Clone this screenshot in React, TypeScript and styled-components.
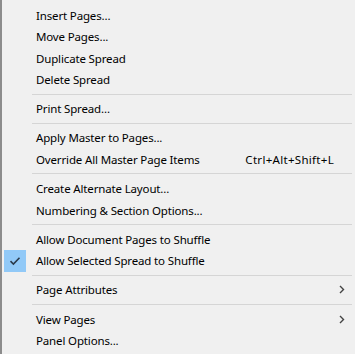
import React from "react";
import styled, { createGlobalStyle } from "styled-components";

const GlobalStyle = createGlobalStyle`
    html, body {
        margin: 0;
        padding: 0;
        background: #f0f0f0;
    }
`;

const Menu = styled.div`
    width: 355px;
    height: 354px;
    box-sizing: border-box;
    background: #f0f0f0;
    border-left: 2px solid #8c8c8c;
    padding-top: 4.25px;
    overflow: hidden;
    font-family: "Noto Sans", "Open Sans", sans-serif;
    font-size: 11.5px;
    letter-spacing: -0.15px;
    color: #000;
`;

const Item = styled.div`
    display: grid;
    grid-template-columns: 32px 1fr auto 21px;
    align-items: center;
    height: 21.5px;
    white-space: nowrap;
`;

const CheckCell = styled.div<{ $on?: boolean }>`
    margin-left: 2px;
    width: 22px;
    height: 21.5px;
    display: flex;
    align-items: center;
    justify-content: center;
    background: ${(p) => (p.$on ? "#91c9f7" : "transparent")};
`;

const Label = styled.span`
    padding-left: 2px;
`;

const Shortcut = styled.span`
    letter-spacing: 0.3px;
`;

const Arrow = styled.div`
    display: flex;
    align-items: center;
    justify-content: flex-end;
    padding-right: 10px;
`;

const Separator = styled.div`
    height: 7.7px;
    display: flex;
    align-items: center;
    padding-left: 30px;
    padding-right: 3px;

    &::after {
        content: "";
        flex: 1;
        height: 1px;
        background: #d5d5d5;
    }
`;

type Entry =
    | { sep: true }
    | { label: string; shortcut?: string; checked?: boolean; sub?: boolean };

const entries: Entry[] = [
    { label: "Insert Pages..." },
    { label: "Move Pages..." },
    { label: "Duplicate Spread" },
    { label: "Delete Spread" },
    { sep: true },
    { label: "Print Spread..." },
    { sep: true },
    { label: "Apply Master to Pages..." },
    { label: "Override All Master Page Items", shortcut: "Ctrl+Alt+Shift+L" },
    { sep: true },
    { label: "Create Alternate Layout..." },
    { label: "Numbering & Section Options..." },
    { sep: true },
    { label: "Allow Document Pages to Shuffle" },
    { label: "Allow Selected Spread to Shuffle", checked: true },
    { sep: true },
    { label: "Page Attributes", sub: true },
    { sep: true },
    { label: "View Pages", sub: true },
    { label: "Panel Options..." },
];

function Check() {
    return (
        <svg width="12" height="10" viewBox="0 0 12 10">
            <path d="M1.5 5.2 L4.4 8 L10.5 1.8" fill="none" stroke="#2b3a4a" strokeWidth="1.6" />
        </svg>
    );
}

function Chevron() {
    return (
        <svg width="6" height="9" viewBox="0 0 6 9">
            <path d="M1 1 L4.5 4.5 L1 8" fill="none" stroke="#444" strokeWidth="1.4" />
        </svg>
    );
}

export default function App() {
    return (
        <>
            <GlobalStyle />
            <Menu>
                {entries.map((e, i) =>
                    "sep" in e ? (
                        <Separator key={i} />
                    ) : (
                        <Item key={i}>
                            <CheckCell $on={e.checked}>{e.checked && <Check />}</CheckCell>
                            <Label>{e.label}</Label>
                            <Shortcut>{e.shortcut}</Shortcut>
                            <Arrow>{e.sub && <Chevron />}</Arrow>
                        </Item>
                    )
                )}
            </Menu>
        </>
    );
}
